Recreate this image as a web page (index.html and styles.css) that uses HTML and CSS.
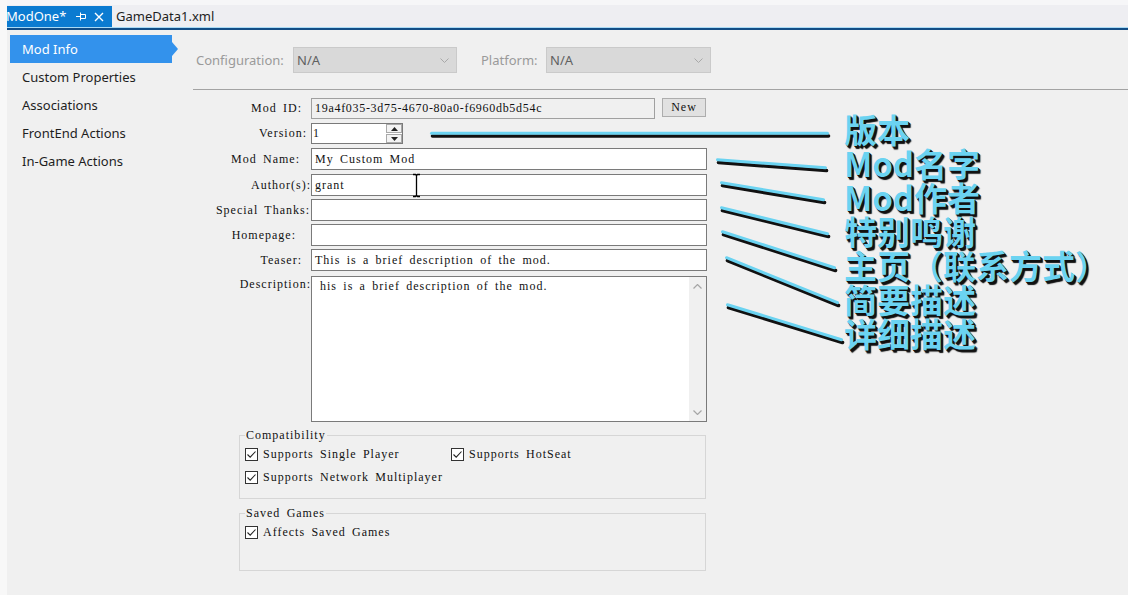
FILE: index.html
```html
<!DOCTYPE html>
<html>
<head>
<meta charset="utf-8">
<link rel="stylesheet" href="styles.css">
</head>
<body>
<div class="window">
  <div class="tabbar">
    <div class="tab active">
      <span class="tab-title">ModOne*</span>
      <svg class="pin" width="11" height="9" viewBox="0 0 11 9"><path d="M0 4.5H4.5M4.5 0.5V8.5M4.5 2.5H9.5V6.5H4.5" fill="none" stroke="#fff" stroke-width="1"/></svg>
      <svg class="close" width="10" height="10" viewBox="0 0 10 10"><path d="M1 1L9 9M9 1L1 9" stroke="#fff" stroke-width="1.4"/></svg>
    </div>
    <div class="tab">GameData1.xml</div>
  </div>
  <div class="tabline"></div>
  <div class="main">
    <nav class="nav">
      <div class="nav-item selected">Mod Info</div>
      <div class="nav-item">Custom Properties</div>
      <div class="nav-item">Associations</div>
      <div class="nav-item">FrontEnd Actions</div>
      <div class="nav-item">In-Game Actions</div>
    </nav>
    <div class="content">
      <div class="config">
        <span class="config-label">Configuration:</span>
        <div class="select conf"><span>N/A</span><svg width="9" height="5" viewBox="0 0 9 5"><path d="M0.5 0.5L4.5 4.5L8.5 0.5" fill="none" stroke="#a8a8a8" stroke-width="1"/></svg></div>
        <span class="config-label platform">Platform:</span>
        <div class="select plat"><span>N/A</span><svg width="9" height="5" viewBox="0 0 9 5"><path d="M0.5 0.5L4.5 4.5L8.5 0.5" fill="none" stroke="#a8a8a8" stroke-width="1"/></svg></div>
      </div>
      <div class="rule"></div>
      <div class="form">
        <div class="row">
          <span class="label pr9 lh21">Mod ID:</span>
          <div class="field id">19a4f035-3d75-4670-80a0-f6960db5d54c</div>
          <div class="btn">New</div>
        </div>
        <div class="row">
          <span class="label pr4 lh21">Version:</span>
          <div class="field version">
            <span class="vtext">1</span>
            <div class="spin">
              <div class="spin-btn"><svg width="7" height="4" viewBox="0 0 7 4"><path d="M0 4L3.5 0L7 4Z" fill="#222"/></svg></div>
              <div class="spin-btn"><svg width="7" height="4" viewBox="0 0 7 4"><path d="M0 0L3.5 4L7 0Z" fill="#222"/></svg></div>
            </div>
          </div>
        </div>
        <div class="row h26">
          <span class="label pr11">Mod Name:</span>
          <div class="field wide">My Custom Mod</div>
        </div>
        <div class="row">
          <span class="label pr0">Author(s):</span>
          <div class="field wide">grant</div>
        </div>
        <div class="row">
          <span class="label pr1">Special Thanks:</span>
          <div class="field wide"></div>
        </div>
        <div class="row">
          <span class="label pr15">Homepage:</span>
          <div class="field wide"></div>
        </div>
        <div class="row h27">
          <span class="label pr9">Teaser:</span>
          <div class="field wide">This is a brief description of the mod.</div>
        </div>
        <div class="row memo-row">
          <span class="label pr0 lh16">Description:</span>
          <div class="memo">
            <div class="memo-text">his is a brief description of the mod.</div>
            <div class="scroll">
              <svg width="9" height="5" viewBox="0 0 9 5"><path d="M0.5 4.5L4.5 0.5L8.5 4.5" fill="none" stroke="#a6a6a6" stroke-width="1.2"/></svg>
              <svg width="9" height="5" viewBox="0 0 9 5"><path d="M0.5 0.5L4.5 4.5L8.5 0.5" fill="none" stroke="#a6a6a6" stroke-width="1.2"/></svg>
            </div>
          </div>
        </div>
      </div>
      <fieldset class="group compat">
        <legend>Compatibility</legend>
        <div class="checks">
          <div class="check"><span class="box"><svg width="11" height="11" viewBox="0 0 11 11"><path d="M1.5 5.5L4.2 8.2L9.5 2.5" fill="none" stroke="#222" stroke-width="1.1"/></svg></span><span>Supports Single Player</span></div>
          <div class="check"><span class="box"><svg width="11" height="11" viewBox="0 0 11 11"><path d="M1.5 5.5L4.2 8.2L9.5 2.5" fill="none" stroke="#222" stroke-width="1.1"/></svg></span><span>Supports HotSeat</span></div>
          <div class="check"><span class="box"><svg width="11" height="11" viewBox="0 0 11 11"><path d="M1.5 5.5L4.2 8.2L9.5 2.5" fill="none" stroke="#222" stroke-width="1.1"/></svg></span><span>Supports Network Multiplayer</span></div>
        </div>
      </fieldset>
      <fieldset class="group saved">
        <legend>Saved Games</legend>
        <div class="checks">
          <div class="check"><span class="box"><svg width="11" height="11" viewBox="0 0 11 11"><path d="M1.5 5.5L4.2 8.2L9.5 2.5" fill="none" stroke="#222" stroke-width="1.1"/></svg></span><span>Affects Saved Games</span></div>
        </div>
      </fieldset>
    </div>
  </div>
</div>

<svg class="ibeam" width="9" height="25" viewBox="0 0 9 25"><path d="M1 1.5H3.5L4.5 2.5L5.5 1.5H8M4.5 2.5V22.5M1 23.5H3.5L4.5 22.5L5.5 23.5H8" fill="none" stroke="#000" stroke-width="1.3"/></svg>

<svg class="lines" width="1128" height="595" viewBox="0 0 1128 595">
  <g stroke="#111" stroke-width="3.6" stroke-linecap="round" fill="none">
    <path d="M432.5 136L828.5 136"/>
    <path d="M718.5 162.5L826.5 170.5"/>
    <path d="M722.5 185.5L824.5 202.5"/>
    <path d="M722.5 210.5L828.5 236.5"/>
    <path d="M723.5 234.5L835.5 270.5"/>
    <path d="M727.5 260.5L838.5 305.5"/>
    <path d="M728.5 307.5L842.5 342.5"/>
  </g>
  <g stroke="#6bd3f1" stroke-width="3" stroke-linecap="round" fill="none">
    <path d="M431.5 133.2L827.5 133.2"/>
    <path d="M717.5 159.7L825.5 167.7"/>
    <path d="M721.5 182.7L823.5 199.7"/>
    <path d="M721.5 207.7L827.5 233.7"/>
    <path d="M722.5 231.7L834.5 267.7"/>
    <path d="M726.5 257.7L837.5 302.7"/>
    <path d="M727.5 304.7L841.5 339.7"/>
  </g>
</svg>

<div class="annot">
  <div>版本</div>
  <div>Mod名字</div>
  <div>Mod作者</div>
  <div>特别鸣谢</div>
  <div>主页（联系方式）</div>
  <div>简要描述</div>
  <div>详细描述</div>
</div>
</body>
</html>
```

FILE: styles.css
```css
* { box-sizing: border-box; }
html, body { margin: 0; padding: 0; }
body {
  position: relative;
  width: 1128px;
  height: 595px;
  overflow: hidden;
  background: #f0f0f0;
  font-family: "Noto Sans", "Open Sans", sans-serif;
}
.window {
  height: 595px;
  border-left: 7px solid #f8f8f8;
  display: flex;
  flex-direction: column;
}
.tabbar {
  height: 27px;
  padding-top: 6px;
  background: linear-gradient(#f6f6f8 0, #f6f6f8 5px, #eeeef2 5px);
  display: flex;
  font-size: 13px;
}
.tab {
  height: 21px;
  line-height: 21px;
  padding-left: 4px;
  color: #1e1e1e;
}
.tab.active {
  width: 105px;
  background: #0b7bd1;
  color: #fff;
  padding-left: 0;
  display: flex;
  align-items: center;
}
.tab-title { margin-left: -1px; }
.pin { margin-left: 10px; }
.close { margin-left: 7px; }
.tabline {
  height: 3px;
  background: linear-gradient(#a9daf5 0, #a9daf5 1px, #124d86 1px);
}
.main { display: flex; flex: 1; }
.nav {
  width: 186px;
  flex-shrink: 0;
  padding-top: 5px;
  font-size: 13px;
  color: #1e1e1e;
}
.nav-item {
  position: relative;
  margin-left: 3px;
  width: 162px;
  height: 28px;
  line-height: 28px;
  padding-left: 12px;
}
.nav-item.selected { background: #3392ec; color: #fff; }
.nav-item.selected::after {
  content: "";
  position: absolute;
  right: -6px;
  top: 7px;
  border-left: 6px solid #3392ec;
  border-top: 7px solid transparent;
  border-bottom: 7px solid transparent;
}
.content {
  flex: 1;
  font-family: "Liberation Serif", serif;
  font-size: 12px;
  letter-spacing: 1px;
  word-spacing: 2.3px;
  color: #111;
}
.config {
  display: flex;
  align-items: center;
  height: 26px;
  margin-top: 17px;
  padding-left: 3px;
  font-family: "Noto Sans", sans-serif;
  font-size: 13px;
  letter-spacing: 0;
  word-spacing: 0;
  color: #9a9a9a;
}
.config-label { width: 97px; }
.config-label.platform { width: 65px; margin-left: 24px; }
.select {
  display: flex;
  align-items: center;
  justify-content: space-between;
  height: 26px;
  background: #d9d9d9;
  border: 1px solid #cacaca;
  padding: 0 7px 0 3px;
  color: #606060;
}
.select.conf { width: 164px; }
.select.plat { width: 165px; }
.rule { height: 1px; background: #a3a3a3; margin-top: 16px; }
.form { margin-top: 8px; }
.row { display: flex; height: 25px; }
.row.h26 { height: 26px; }
.row.h27 { height: 27px; }
.row.memo-row { height: 146px; }
.label {
  width: 118px;
  flex-shrink: 0;
  text-align: right;
  line-height: 22px;
  white-space: nowrap;
}
.lh21 { line-height: 21px; }
.lh16 { line-height: 16px; }
.pr0 { padding-right: 0; }
.pr1 { padding-right: 1px; }
.pr4 { padding-right: 4px; }
.pr9 { padding-right: 9px; }
.pr11 { padding-right: 11px; }
.pr15 { padding-right: 15px; }
.field {
  height: 22px;
  border: 1px solid #7a7a7a;
  background: #fff;
  line-height: 20px;
  padding-left: 3px;
  white-space: nowrap;
  overflow: hidden;
}
.field.wide { width: 396px; }
.field.id {
  width: 344px;
  height: 21px;
  line-height: 19px;
  background: #f0f0f0;
  border-color: #a0a0a0;
  letter-spacing: 0.7px;
}
.btn {
  margin-left: 7px;
  width: 44px;
  height: 19px;
  border: 1px solid #adadad;
  background: #e1e1e1;
  text-align: center;
  line-height: 17px;
}
.field.version {
  width: 92px;
  height: 21px;
  display: flex;
  padding-left: 1px;
  padding-right: 0;
  line-height: 19px;
}
.vtext { flex: 1; }
.spin {
  width: 16px;
  display: flex;
  flex-direction: column;
  gap: 1px;
}
.spin-btn {
  flex: 1;
  border: 1px solid #a9a9a9;
  background: #f3f3f3;
  display: flex;
  align-items: center;
  justify-content: center;
}
.memo {
  width: 396px;
  height: 146px;
  border: 1px solid #7a7a7a;
  background: #fff;
  display: flex;
}
.memo-text {
  flex: 1;
  padding: 2px 0 0 8px;
  line-height: 14px;
  white-space: nowrap;
}
.scroll {
  width: 17px;
  background: #f0f0f0;
  display: flex;
  flex-direction: column;
  justify-content: space-between;
  align-items: center;
  padding: 7px 0 6px;
}
.group {
  margin: 7px 0 0 46px;
  width: 467px;
  border: 1px solid #d6d6d6;
  padding: 7px 5px 14px;
  min-width: 0;
}
.group.saved { margin-top: 8px; padding-bottom: 31px; }
.group legend {
  padding: 0 1px;
  line-height: 12px;
}
.checks {
  display: grid;
  grid-template-columns: 206px auto;
  row-gap: 10px;
}
.check {
  display: flex;
  align-items: center;
  height: 13px;
  white-space: nowrap;
}
.box {
  width: 13px;
  height: 13px;
  border: 1px solid #333;
  background: #fff;
  margin-right: 5px;
  display: flex;
}
.ibeam { position: absolute; left: 412px; top: 173px; }
.lines { position: absolute; left: 0; top: 0; pointer-events: none; }
.annot {
  position: absolute;
  left: 844px;
  top: 112px;
  font-family: "Noto Sans CJK SC", sans-serif;
  font-weight: 700;
  font-size: 33px;
  line-height: 34px;
  color: #6bd3f1;
  white-space: nowrap;
  text-shadow: 1px 1px 0 #111, 2px 2px 0 #111, 2.5px 2.5px 1px #111;
}
```
